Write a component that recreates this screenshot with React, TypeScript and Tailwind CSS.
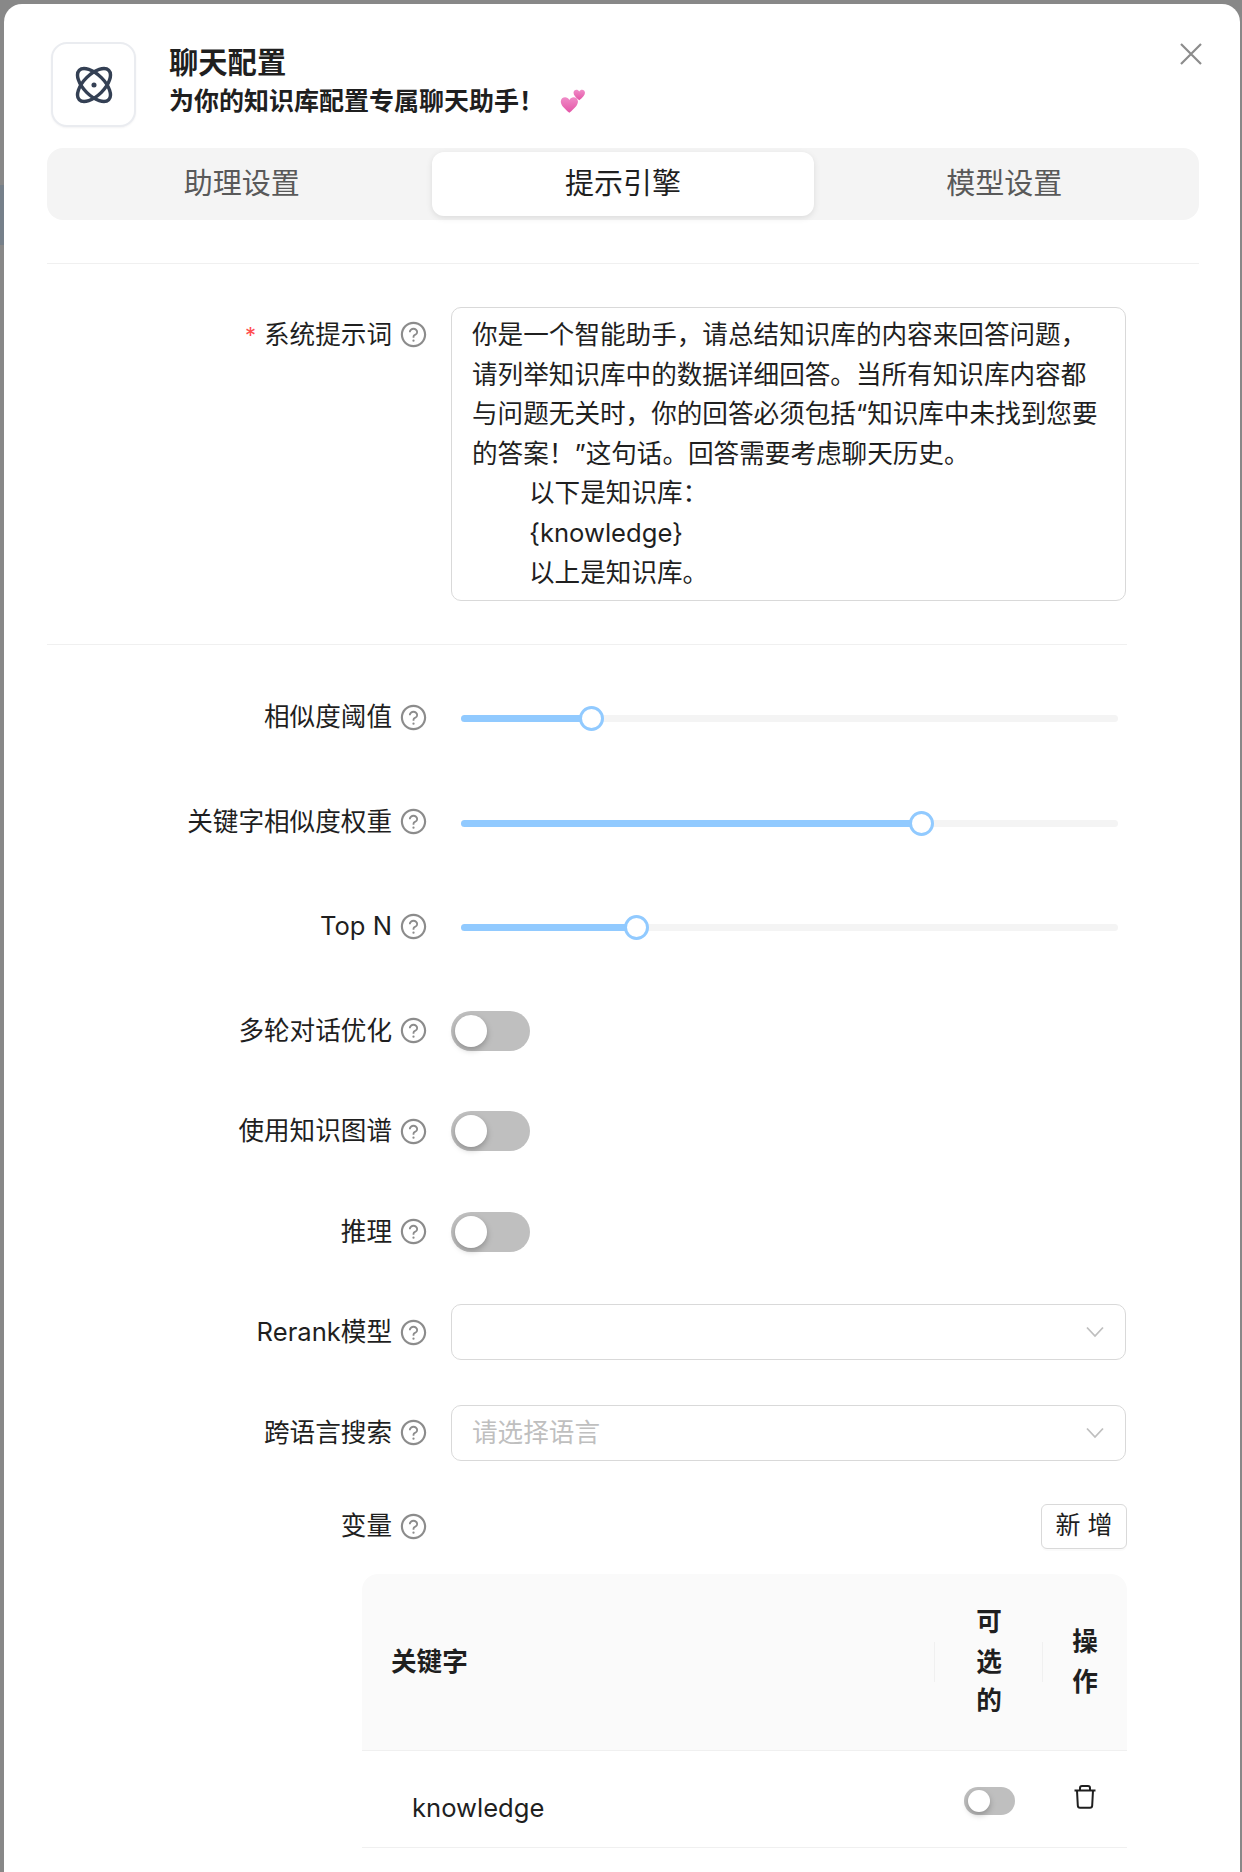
import React from 'react';
import { AiOutlineQuestionCircle } from 'react-icons/ai';

const FONT = "font-['Inter','Noto_Sans_CJK_SC','Noto_Sans',sans-serif]";

const PROMPT_LINES = [
  '你是一个智能助手，请总结知识库的内容来回答问题，',
  '请列举知识库中的数据详细回答。当所有知识库内容都',
  '与问题无关时，你的回答必须包括“知识库中未找到您要',
  '的答案！”这句话。回答需要考虑聊天历史。',
];

const SLIDERS = [
  { label: '相似度阈值', value: 130 },
  { label: '关键字相似度权重', value: 460 },
  { label: 'Top N', value: 175 },
];

const SWITCHES = ['多轮对话优化', '使用知识图谱', '推理'];

const HEART =
  'M12 21.5 C5 15.5 1 11.5 1 7 C1 3.5 3.8 1.5 6.5 1.5 C8.8 1.5 10.8 2.8 12 5 C13.2 2.8 15.2 1.5 17.5 1.5 C20.2 1.5 23 3.5 23 7 C23 11.5 19 15.5 12 21.5 Z';

function HelpIcon() {
  return <AiOutlineQuestionCircle className="shrink-0 text-[#8c8c8c]" size={29} />;
}

function Label({ text, required }: { text: string; required?: boolean }) {
  return (
    <div className="flex w-[381px] shrink-0 items-center justify-end gap-[7px]">
      {required && <span className="mr-[1px] text-[22px] leading-none text-[#ff4d4f]">*</span>}
      <span className="text-[#1f1f1f]">{text}</span>
      <HelpIcon />
    </div>
  );
}

function Toggle({ small }: { small?: boolean }) {
  return (
    <div
      className={`flex items-center rounded-full bg-[#bfbfbf] ${
        small ? 'h-[28px] w-[51px] pl-[4px]' : 'h-[40px] w-[79px] pl-[4px]'
      }`}
    >
      <div
        className={`rounded-full bg-white shadow-[0_3px_6px_rgba(0,0,0,0.25)] ${small ? 'h-[22px] w-[22px]' : 'h-[32px] w-[32px]'}`}
      />
    </div>
  );
}

function Chevron() {
  return (
    <svg width="20" height="14" viewBox="0 0 20 14" fill="none" className="shrink-0">
      <path d="M2 2.5 L10 11 L18 2.5" stroke="#bfbfbf" strokeWidth="1.8" />
    </svg>
  );
}

function SelectBox({ placeholder }: { placeholder?: string }) {
  return (
    <div className="flex h-[56px] w-[675px] items-center justify-between rounded-[10px] border border-[#d9d9d9] pl-[20px] pr-[20px]">
      <span className="text-[#bfbfbf]">{placeholder}</span>
      <Chevron />
    </div>
  );
}

function TrashIcon() {
  return (
    <svg width="24" height="24" viewBox="0 0 24 24" fill="none" stroke="#1f1f1f" strokeWidth="2">
      <path d="M1.5 5.5 H22.5" />
      <path d="M7 5.5 V3 C7 1.8 7.8 1 9 1 H15 C16.2 1 17 1.8 17 3 V5.5" />
      <path d="M4 5.5 L4.8 20.5 C4.9 22 5.6 22.8 7 22.8 H17 C18.4 22.8 19.1 22 19.2 20.5 L20 5.5" />
    </svg>
  );
}

function Hearts() {
  return (
    <svg width="25" height="25" viewBox="0 0 25 25" className="ml-[16px] shrink-0">
      <defs>
        <linearGradient id="heartFill" x1="0" y1="0" x2="0" y2="1">
          <stop offset="0" stopColor="#f08cc8" />
          <stop offset="1" stopColor="#e455a6" />
        </linearGradient>
      </defs>
      <path d={HEART} fill="url(#heartFill)" transform="translate(0 7) scale(0.78)" />
      <path d={HEART} fill="url(#heartFill)" transform="translate(13 0) scale(0.52)" />
    </svg>
  );
}

export default function App() {
  return (
    <div className={`${FONT} relative h-[1872px] w-[1242px] overflow-hidden bg-[#888888] text-[25.6px] leading-[39.6px] text-[#1f1f1f]`}>
      <div className="absolute left-0 top-[185px] h-[60px] w-[4px] bg-[#76808a]" />
      <div className="ml-[4px] mr-[2px] mt-[4px] h-[1868px] rounded-t-[18px] bg-white pl-[43px] pt-[38px]">
        <button type="button" className="absolute left-[1180px] top-[43px]">
          <svg width="22" height="22" viewBox="0 0 22 22" stroke="#8c8c8c" strokeWidth="2.2">
            <path d="M1 1 L21 21 M21 1 L1 21" />
          </svg>
        </button>

        <div className="flex items-start">
          <div className="ml-[4px] flex h-[85px] w-[85px] items-center justify-center rounded-[16px] border-2 border-[#eaecf0] bg-white shadow-[0_1px_2px_rgba(16,24,40,0.05)]">
            <svg width="38" height="38" viewBox="0 0 42 42" fill="none" stroke="#344054" strokeWidth="3.8">
              <ellipse cx="21" cy="21" rx="23" ry="11.5" transform="rotate(45 21 21)" />
              <ellipse cx="21" cy="21" rx="23" ry="11.5" transform="rotate(-45 21 21)" />
              <circle cx="21" cy="21" r="2.8" fill="#344054" stroke="none" />
            </svg>
          </div>
          <div className="ml-[33px] pt-[2px]">
            <div className="text-[29.3px] font-semibold leading-[38px] text-[#1f1f1f]">聊天配置</div>
            <div className="mt-[1px] flex items-center text-[25px] font-semibold leading-[36px] text-[#1f1f1f]">
              为你的知识库配置专属聊天助手！
              <Hearts />
            </div>
          </div>
        </div>

        <div className="mt-[21px] flex h-[72px] w-[1152px] items-center rounded-[16px] bg-[#f4f4f4] px-[4px] text-[29px]">
          <div className="flex h-[64px] flex-1 items-center justify-center text-[#595959]">助理设置</div>
          <div className="flex h-[64px] flex-1 items-center justify-center rounded-[12px] bg-white text-[#1f1f1f] shadow-[0_2px_6px_rgba(0,0,0,0.1)]">提示引擎</div>
          <div className="flex h-[64px] flex-1 items-center justify-center text-[#595959]">模型设置</div>
        </div>

        <div className="mt-[43px] h-px w-[1152px] bg-[#f0f0f0]" />

        <div className="mt-[43px] flex w-[1080px] items-start">
          <div className="pt-[8px]">
            <Label text="系统提示词" required />
          </div>
          <div className="ml-[23px] h-[294px] w-[675px] rounded-[10px] border border-[#d9d9d9] px-[20px] pt-[7px]">
            {PROMPT_LINES.map((line) => (
              <div key={line} className="whitespace-nowrap">{line}</div>
            ))}
            <div className="pl-[57px]">以下是知识库：</div>
            <div className="pl-[57px]">{'{knowledge}'}</div>
            <div className="pl-[57px]">以上是知识库。</div>
          </div>
        </div>

        <div className="mt-[43px] h-px w-[1080px] bg-[#f0f0f0]" />

        <div className="mt-[44px] w-[1080px]">
          {SLIDERS.map((slider) => (
            <div key={slider.label} className="mb-[48.5px] flex h-[56px] items-center">
              <Label text={slider.label} />
              <div className="relative ml-[33px] mt-[3px] h-[7px] w-[657px] rounded-full bg-[#f4f4f4]">
                <div className="h-full rounded-full bg-[#91caff]" style={{ width: slider.value }} />
                <div
                  className="absolute top-[-9px] ml-[-12px] h-[25px] w-[25px] rounded-full border-[3px] border-[#91caff] bg-white"
                  style={{ left: slider.value }}
                />
              </div>
            </div>
          ))}
          {SWITCHES.map((label) => (
            <div key={label} className="mb-[44.5px] flex h-[56px] items-center">
              <Label text={label} />
              <div className="ml-[23px]">
                <Toggle />
              </div>
            </div>
          ))}
          <div className="mb-[44.5px] flex h-[56px] items-center">
            <Label text="Rerank模型" />
            <div className="ml-[23px]">
              <SelectBox />
            </div>
          </div>
          <div className="flex h-[56px] items-center">
            <Label text="跨语言搜索" />
            <div className="ml-[23px]">
              <SelectBox placeholder="请选择语言" />
            </div>
          </div>

          <div className="mt-[43px] flex h-[45px] items-center justify-between">
            <Label text="变量" />
            <div className="flex h-[45px] w-[86px] items-center justify-center rounded-[6px] border border-[#d9d9d9] bg-white text-[25px] shadow-[0_2px_0_rgba(0,0,0,0.02)]">
              新 增
            </div>
          </div>

          <table className="ml-[315px] mt-[25px] w-[765px] table-fixed border-separate border-spacing-0">
            <colgroup>
              <col className="w-[573px]" />
              <col className="w-[108px]" />
              <col className="w-[84px]" />
            </colgroup>
            <thead>
              <tr className="h-[177px] bg-[#fafafa] font-semibold">
                <th className="relative rounded-tl-[16px] border-b border-[#f0f0f0] pl-[29px] text-left font-semibold">
                  关键字
                  <span className="absolute right-0 top-[68px] h-[40px] w-px bg-[#f0f0f0]" />
                </th>
                <th className="relative border-b border-[#f0f0f0] px-[30px] text-center font-semibold">
                  可选的
                  <span className="absolute right-0 top-[68px] h-[40px] w-px bg-[#f0f0f0]" />
                </th>
                <th className="rounded-tr-[16px] border-b border-[#f0f0f0] px-[18px] text-center font-semibold">操作</th>
              </tr>
            </thead>
            <tbody>
              <tr className="h-[97px]">
                <td className="border-b border-[#f0f0f0] pl-[50px] pt-[18px]">knowledge</td>
                <td className="border-b border-[#f0f0f0] pl-[29px] pt-[4px]">
                  <Toggle small />
                </td>
                <td className="border-b border-[#f0f0f0] pb-[4px] pl-[30px]">
                  <TrashIcon />
                </td>
              </tr>
            </tbody>
          </table>
        </div>
      </div>
    </div>
  );
}
